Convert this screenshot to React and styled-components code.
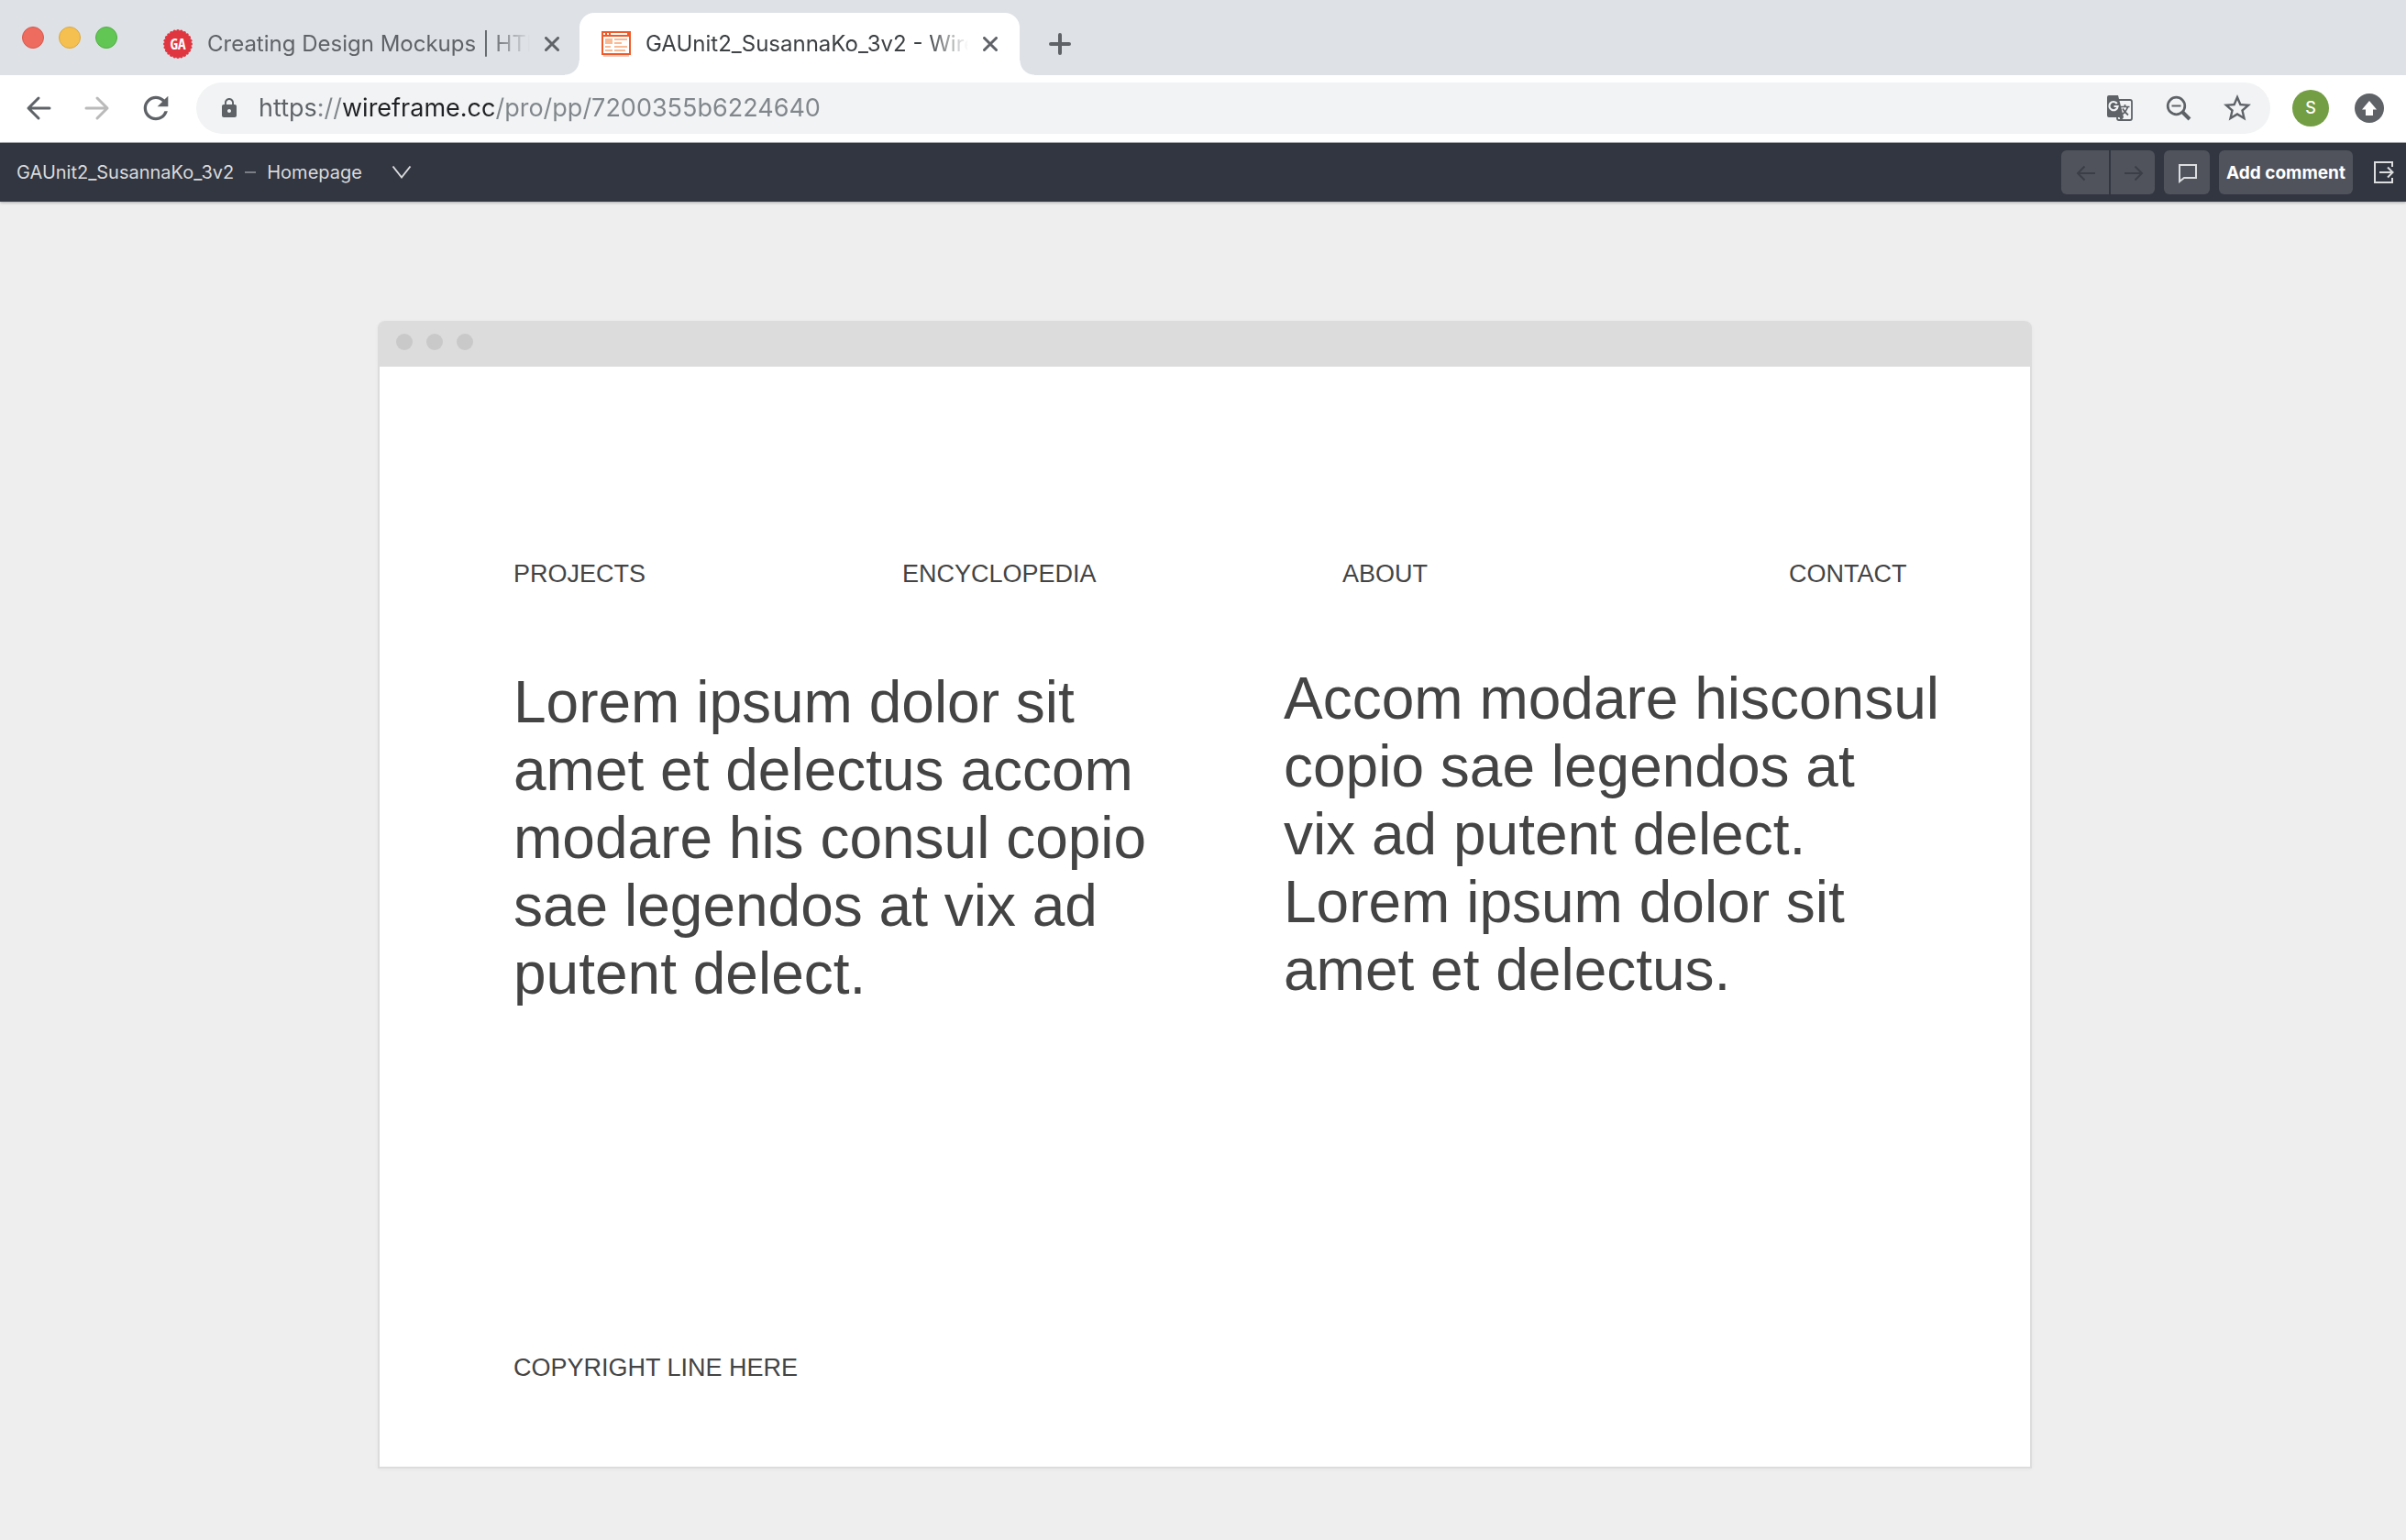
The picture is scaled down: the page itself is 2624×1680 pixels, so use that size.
import React from "react";
import styled, { createGlobalStyle } from "styled-components";
import { MdStarBorder, MdLock, MdRefresh } from "react-icons/md";

const ui = `Inter, Roboto, "Liberation Sans", sans-serif`;
const wire = `"Liberation Sans", Arial, sans-serif`;

const GlobalStyle = createGlobalStyle`
  *, *::before, *::after { box-sizing: border-box; }
  body { margin: 0; background: #eee; font-family: ${ui}; }
  button, input { font: inherit; color: inherit; border: 0; padding: 0; margin: 0; background: none; }
  svg { display: block; flex: none; }
`;

const Page = styled.div`
  display: flex;
  flex-direction: column;
  min-height: 100vh;
`;

/* ---------- Tab strip ---------- */

const TabStrip = styled.div`
  display: flex;
  align-items: center;
  height: 82px;
  padding-left: 24px;
  background: #dee1e6;
`;

const WindowControls = styled.div`
  display: flex;
  gap: 16px;
  margin-right: 26px;
`;

const WindowButton = styled.button`
  width: 24px;
  height: 24px;
  border-radius: 50%;
  background: ${(p) => p.$fill};
  border: 1px solid ${(p) => p.$edge};
`;

const Tab = styled.div`
  position: relative;
  align-self: flex-end;
  display: flex;
  align-items: center;
  gap: 16px;
  width: 480px;
  height: 68px;
  padding: 0 24px;
  border-radius: 16px 16px 0 0;
  color: ${(p) => (p.$active ? "#3c4043" : "#5f6368")};
  background: ${(p) => (p.$active ? "#fff" : "transparent")};
  margin-left: ${(p) => (p.$active ? "-2px" : "0")};

  &::before,
  &::after {
    content: "";
    display: ${(p) => (p.$active ? "block" : "none")};
    position: absolute;
    bottom: 0;
    width: 16px;
    height: 16px;
  }
  &::before {
    right: 100%;
    background: radial-gradient(circle at 0 0, transparent 15px, #fff 16px);
  }
  &::after {
    left: 100%;
    background: radial-gradient(circle at 100% 0, transparent 15px, #fff 16px);
  }
`;

const TabTitle = styled.button`
  flex: 1;
  min-width: 0;
  overflow: hidden;
  text-align: left;
  white-space: nowrap;
  font-size: 24px;
  line-height: 32px;
  mask-image: linear-gradient(to right, #000 calc(100% - 44px), transparent);
`;

const IconButton = styled.button`
  display: flex;
  align-items: center;
  justify-content: center;
  flex: none;
  width: ${(p) => p.$size}px;
  height: ${(p) => p.$size}px;
  color: ${(p) => p.$color || "#5f6368"};
`;

const NewTabButton = styled(IconButton)`
  align-self: flex-end;
  height: 68px;
  margin-left: 24px;
`;

/* ---------- Address bar ---------- */

const AddressBar = styled.div`
  display: flex;
  align-items: center;
  height: 74px;
  padding: 0 20px 2px 22px;
  background: #fff;
  border-bottom: 1px solid #a9adb0;
`;

const NavButtons = styled.div`
  display: flex;
  gap: 24px;
  margin-right: 24px;
`;

const Omnibox = styled.form`
  display: flex;
  align-items: center;
  flex: 1;
  height: 56px;
  padding: 0 16px 0 24px;
  border-radius: 28px;
  background: #f1f3f4;
  color: #5f6368;
`;

const UrlInput = styled.input`
  flex: 1;
  min-width: 0;
  height: 40px;
  margin-left: 20px;
  font-size: 27px;
  line-height: 40px;
  color: #80868b;
  outline: none;
  background: linear-gradient(to right, #5f6368 66px, #80868b 66px 90px, #202124 90px 258px, #80868b 258px);
  background-clip: text;
  -webkit-text-fill-color: transparent;
`;

const OmniboxActions = styled.div`
  display: flex;
  gap: 24px;
`;

const Avatar = styled.button`
  width: 40px;
  height: 40px;
  margin: 0 24px;
  border-radius: 50%;
  background: #739e44;
  color: #fff;
  font-size: 18px;
  font-weight: 500;
  line-height: 40px;
  text-align: center;
`;

/* ---------- Editor bar ---------- */

const EditorBar = styled.header`
  display: flex;
  align-items: center;
  justify-content: space-between;
  height: 64px;
  padding: 0 12px 0 18px;
  background: #323641;
  color: #d9dadc;
  box-shadow: 0 1px 3px rgba(0, 0, 0, 0.3);
`;

const Breadcrumb = styled.div`
  display: flex;
  align-items: center;
  gap: 12px;
  font-size: 20px;
  line-height: 28px;
`;

const Dash = styled.span`
  width: 12px;
  height: 2px;
  background: #7b7e85;
`;

const PagePicker = styled.button`
  display: flex;
  align-items: center;
  gap: 32px;
`;

const EditorTools = styled.div`
  display: flex;
  align-items: center;
  gap: 10px;
`;

const ToolGroup = styled.div`
  display: flex;
  gap: 2px;
  border-radius: 6px;
  overflow: hidden;
`;

const ToolButton = styled.button`
  display: flex;
  align-items: center;
  justify-content: center;
  width: ${(p) => p.$width || 50}px;
  height: 48px;
  padding: 2px 0 0 2px;
  background: #50535c;
  color: ${(p) => (p.disabled ? "#3b3e46" : "#dcdddf")};
  border-radius: ${(p) => (p.$grouped ? "0" : "6px")};
`;

const CommentButton = styled(ToolButton)`
  padding: 0;
  color: #fff;
  font-size: 19px;
  font-weight: 700;
`;

const ExitLink = styled.a`
  display: flex;
  margin-left: 12px;
  color: #dcdddf;
`;

/* ---------- Wireframe ---------- */

const Canvas = styled.main`
  flex: 1;
  padding: 130px 0 78px 4px;
`;

const Frame = styled.article`
  max-width: 1804px;
  margin: 0 auto;
  border: 2px solid #dcdcdc;
  border-top: 0;
  border-radius: 8px 8px 0 0;
  background: #fff;
  box-shadow: 0 1px 4px rgba(0, 0, 0, 0.04);
`;

const FrameBar = styled.div`
  display: flex;
  align-items: center;
  gap: 15px;
  height: 50px;
  padding: 0 18px 4px;
  border-radius: 6px 6px 0 0;
  background: #dcdcdc;
`;

const FrameDot = styled.span`
  width: 18px;
  height: 18px;
  border-radius: 50%;
  background: #c9c9c9;
`;

const FrameBody = styled.div`
  display: flex;
  flex-direction: column;
  min-height: 1200px;
  padding: 210px 0 92px 146px;
  font-family: ${wire};
  color: #444;
`;

const SiteNav = styled.nav`
  display: grid;
  grid-template-columns: 424fr 480fr 487fr 263fr;
  margin-bottom: 83px;
  font-size: 27px;
  line-height: 32px;
`;

const NavLink = styled.a`
  color: inherit;
  text-decoration: none;
`;

const Columns = styled.section`
  display: grid;
  grid-template-columns: 840fr 814fr;
`;

const Copy = styled.p`
  margin: 0;
  padding-top: ${(p) => p.$drop || 0}px;
  font-size: 64px;
  line-height: 74px;
  white-space: pre-line;
`;

const Copyright = styled.footer`
  margin-top: auto;
  font-size: 27px;
  line-height: 32px;
`;

/* ---------- Icons ---------- */

const scallops = Array.from({ length: 24 }, (_, i) => {
  const a = (i * Math.PI) / 12;
  return { x: 16 + 14.2 * Math.cos(a), y: 16 + 14.2 * Math.sin(a) };
});

const GaBadge = () => (
  <svg width="32" height="32" viewBox="0 0 32 32" aria-hidden="true">
    <g fill="#df3640">
      <circle cx="16" cy="16" r="14.6" />
      {scallops.map((s, i) => (
        <circle key={i} cx={s.x} cy={s.y} r="1.8" />
      ))}
    </g>
    <text
      x="16"
      y="22"
      textAnchor="middle"
      fill="#fff"
      fontSize="16"
      fontWeight="700"
      fontFamily='"Liberation Sans Narrow", "Open Sans Condensed", "Roboto Condensed", Roboto, sans-serif'
    >
      GA
    </text>
  </svg>
);

const WireframeBadge = () => (
  <svg width="32" height="28" viewBox="0 0 32 28" shapeRendering="crispEdges" aria-hidden="true">
    <path fill="#e9cdc5" d="M2 26h28v2H2z" />
    <path fill="#f05a28" d="M0 0h32v26H0z" />
    <path fill="#fff" d="M2 2h2v2H2zM6 2h2v2H6zM10 2h18v2H10zM2 6h28v18H2z" />
    <path
      fill="#f8bb96"
      d="M4 8h8v6H4zM14 8h14v2H14zM14 12h8v2H14zM4 16h6v2H4zM14 16h14v2H14zM4 20h8v2H4zM14 20h12v2H14z"
    />
  </svg>
);

const Stroke = ({ w, h, d, weight = 3, cap = "round" }) => (
  <svg
    width={w}
    height={h}
    viewBox={`0 0 ${w} ${h}`}
    fill="none"
    stroke="currentColor"
    strokeWidth={weight}
    strokeLinecap={cap}
    strokeLinejoin={cap === "round" ? "round" : "miter"}
    aria-hidden="true"
  >
    <path d={d} />
  </svg>
);

const CloseIcon = () => <Stroke w={16} h={16} d="M1.5 1.5l13 13M14.5 1.5l-13 13" />;
const PlusIcon = () => <Stroke w={24} h={24} weight={4} d="M12 2v20M2 12h20" />;
const BackIcon = () => <Stroke w={28} h={28} d="M26 14H3M14 3L3 14l11 11" />;
const ForwardIcon = () => <Stroke w={28} h={28} d="M2 14h23M14 3l11 11-11 11" />;
const ChevronIcon = () => <Stroke w={22} h={16} weight={2} cap="butt" d="M1.5 1.5L11 13.5 20.5 1.5" />;
const ToolBackIcon = () => <Stroke w={22} h={18} weight={2} cap="butt" d="M21 9H2M9.5 1.5L2 9l7.5 7.5" />;
const ToolForwardIcon = () => <Stroke w={22} h={18} weight={2} cap="butt" d="M1 9h19M12.5 1.5L20 9l-7.5 7.5" />;
const BubbleIcon = () => <Stroke w={22} h={22} weight={2} cap="butt" d="M2 2h18v14H7l-5 4z" />;
const ExitIcon = () => (
  <Stroke w={24} h={26} weight={2} cap="butt" d="M21 7V2H2v22h19v-5M7 13h14M16 7.5l5.5 5.5-5.5 5.5" />
);

const ZoomOutIcon = () => (
  <svg width="28" height="28" viewBox="0 0 28 28" fill="none" stroke="currentColor" aria-hidden="true">
    <circle cx="11.5" cy="11.5" r="9.3" strokeWidth="2.7" />
    <path d="M6.5 11.5h10" strokeWidth="2" />
    <path d="M18.5 18.5l7.5 7.5" strokeWidth="4" />
  </svg>
);

const TranslateIcon = () => (
  <svg width="28" height="28" viewBox="0 0 28 28" fill="none" stroke="currentColor" aria-hidden="true">
    <rect x="11" y="5" width="16" height="22" rx="2" strokeWidth="1.8" />
    <path d="M15 12.5h9.5M19.5 10v2.5M22.5 12.5c-1 3.500-3.500 6.500-6.500 8.500M17 14.500c1.500 3 3.500 5 6 7" strokeWidth="1.7" />
    <path fill="currentColor" stroke="none" d="M2 0h10l6 24-3 4-1.500-4H2a2 2 0 0 1-2-2V2a2 2 0 0 1 2-2z" />
    <path d="M10.800 9A4.600 4.600 0 1 0 11.600 12H7.500" stroke="#f1f3f4" strokeWidth="2.200" />
  </svg>
);

const UpdateIcon = () => (
  <svg width="32" height="32" viewBox="0 0 32 32" aria-hidden="true">
    <circle cx="16" cy="16" r="16" fill="#5f6368" />
    <path fill="#fff" d="M16 8l8 9.5h-4V24h-8v-6.5H8z" />
  </svg>
);

/* ---------- Content ---------- */

const windowButtons = [
  { name: "Close window", fill: "#ed6b5f", edge: "#d9574b" },
  { name: "Minimize window", fill: "#f5c04f", edge: "#dca83c" },
  { name: "Zoom window", fill: "#62c655", edge: "#4fae42" },
];

const tabs = [
  { title: "Creating Design Mockups | HTM", icon: <GaBadge />, active: false },
  { title: "GAUnit2_SusannaKo_3v2 - Wire", icon: <WireframeBadge />, active: true },
];

const navItems = ["PROJECTS", "ENCYCLOPEDIA", "ABOUT", "CONTACT"];

const leftCopy = `Lorem ipsum dolor sit
amet et delectus accom
modare his consul copio
sae legendos at vix ad
putent delect.`;

const rightCopy = `Accom modare hisconsul
copio sae legendos at
vix ad putent delect.
Lorem ipsum dolor sit
amet et delectus.`;

export default function App() {
  return (
    <Page>
      <GlobalStyle />
      <TabStrip>
        <WindowControls>
          {windowButtons.map((b) => (
            <WindowButton key={b.name} aria-label={b.name} $fill={b.fill} $edge={b.edge} />
          ))}
        </WindowControls>
        {tabs.map((t) => (
          <Tab key={t.title} $active={t.active}>
            {t.icon}
            <TabTitle>{t.title}</TabTitle>
            <IconButton $size={16} aria-label="Close tab">
              <CloseIcon />
            </IconButton>
          </Tab>
        ))}
        <NewTabButton $size={40} aria-label="New tab">
          <PlusIcon />
        </NewTabButton>
      </TabStrip>

      <AddressBar>
        <NavButtons>
          <IconButton $size={40} aria-label="Back">
            <BackIcon />
          </IconButton>
          <IconButton $size={40} $color="#bababa" aria-label="Forward">
            <ForwardIcon />
          </IconButton>
          <IconButton $size={40} aria-label="Reload">
            <MdRefresh size={40} />
          </IconButton>
        </NavButtons>
        <Omnibox onSubmit={(e) => e.preventDefault()}>
          <MdLock size={24} />
          <UrlInput aria-label="Address" defaultValue="https://wireframe.cc/pro/pp/7200355b6224640" />
          <OmniboxActions>
            <IconButton type="button" $size={40} aria-label="Translate">
              <TranslateIcon />
            </IconButton>
            <IconButton type="button" $size={40} aria-label="Zoom out">
              <ZoomOutIcon />
            </IconButton>
            <IconButton type="button" $size={40} aria-label="Bookmark">
              <MdStarBorder size={36} />
            </IconButton>
          </OmniboxActions>
        </Omnibox>
        <Avatar aria-label="Profile">S</Avatar>
        <IconButton $size={40} aria-label="Update">
          <UpdateIcon />
        </IconButton>
      </AddressBar>

      <EditorBar>
        <Breadcrumb>
          <span>GAUnit2_SusannaKo_3v2</span>
          <Dash />
          <PagePicker>
            Homepage
            <ChevronIcon />
          </PagePicker>
        </Breadcrumb>
        <EditorTools>
          <ToolGroup>
            <ToolButton $grouped $width={52} disabled aria-label="Previous page">
              <ToolBackIcon />
            </ToolButton>
            <ToolButton $grouped $width={48} disabled aria-label="Next page">
              <ToolForwardIcon />
            </ToolButton>
          </ToolGroup>
          <ToolButton aria-label="Show comments">
            <BubbleIcon />
          </ToolButton>
          <CommentButton $width={146}>Add comment</CommentButton>
          <ExitLink href="#exit" aria-label="Exit">
            <ExitIcon />
          </ExitLink>
        </EditorTools>
      </EditorBar>

      <Canvas>
        <Frame>
          <FrameBar>
            <FrameDot />
            <FrameDot />
            <FrameDot />
          </FrameBar>
          <FrameBody>
            <SiteNav>
              {navItems.map((item) => (
                <NavLink key={item} href={`#${item.toLowerCase()}`}>
                  {item}
                </NavLink>
              ))}
            </SiteNav>
            <Columns>
              <Copy $drop={4}>{leftCopy}</Copy>
              <Copy>{rightCopy}</Copy>
            </Columns>
            <Copyright>COPYRIGHT LINE HERE</Copyright>
          </FrameBody>
        </Frame>
      </Canvas>
    </Page>
  );
}
